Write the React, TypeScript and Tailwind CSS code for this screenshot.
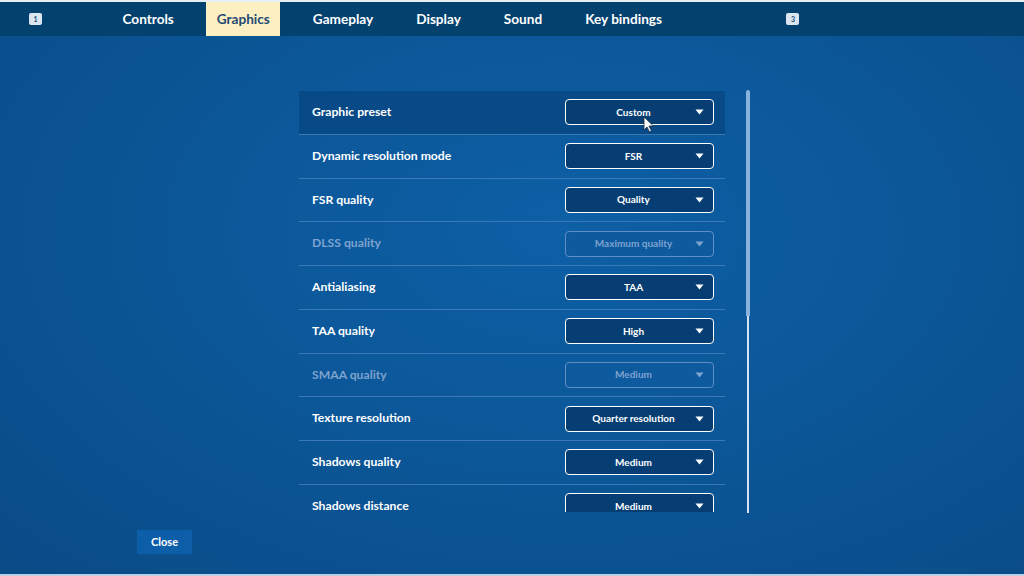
import React from "react";

type Row = { label: string; value: string; disabled?: boolean; active?: boolean };

const rows: Row[] = [
    { label: "Graphic preset", value: "Custom", active: true },
    { label: "Dynamic resolution mode", value: "FSR" },
    { label: "FSR quality", value: "Quality" },
    { label: "DLSS quality", value: "Maximum quality", disabled: true },
    { label: "Antialiasing", value: "TAA" },
    { label: "TAA quality", value: "High" },
    { label: "SMAA quality", value: "Medium", disabled: true },
    { label: "Texture resolution", value: "Quarter resolution" },
    { label: "Shadows quality", value: "Medium" },
    { label: "Shadows distance", value: "Medium" },
];

const tabs = ["Controls", "Graphics", "Gameplay", "Display", "Sound", "Key bindings"];

function KeyBadge({ k }: { k: string }) {
    return (
        <div className="w-[13px] h-[12px] rounded-[2px] bg-[#dbe6f1] text-[#1d4a78] text-[7px] font-bold flex items-center justify-center leading-none">
            {k}
        </div>
    );
}

function Caret({ dim }: { dim?: boolean }) {
    return (
        <svg width="9" height="6" viewBox="0 0 9 6" className="absolute right-[9px] top-1/2 -translate-y-1/2">
            <path d="M0.5 0.5 H8.5 L4.5 5.5 Z" fill={dim ? "#7fa3cf" : "#ffffff"} />
        </svg>
    );
}

function Dropdown({ value, disabled }: { value: string; disabled?: boolean }) {
    return (
        <div
            className={`relative w-[149px] h-[26px] rounded-[4px] border-[1.5px] flex items-center justify-center text-[10px] font-bold ${
                disabled
                    ? "border-[#5f8fc4] bg-[#0d5a9f] text-[#7fa3cf]"
                    : "border-white bg-[#063e74] text-white"
            }`}
        >
            <span className="-ml-[12px]">{value}</span>
            <Caret dim={disabled} />
        </div>
    );
}

export default function App() {
    return (
        <div
            className="w-full h-[576px] overflow-hidden flex flex-col bg-[radial-gradient(ellipse_at_55%_40%,#0d5fa6_0%,#0b5595_55%,#0a4b87_100%)] text-white"
            style={{ fontFamily: "Lato, 'Open Sans', sans-serif" }}
        >
            {/* top edge */}
            <div className="h-[2px] bg-[#e6eef6] shrink-0" />

            {/* Tab bar */}
            <div className="h-[34px] shrink-0 bg-[#03416f] flex items-center">
                <div className="w-[29px]" />
                <KeyBadge k="1" />
                <div className="w-[70px]" />
                <div className="flex items-stretch h-full gap-[22px]">
                    {tabs.map((t) => (
                        <div
                            key={t}
                            className={`px-[10.5px] flex items-center text-[13.6px] font-bold ${
                                t === "Graphics" ? "bg-[#fcefc2] text-[#244a74]" : "text-white"
                            }`}
                        >
                            {t}
                        </div>
                    ))}
                </div>
                <div className="w-[114px]" />
                <KeyBadge k="3" />
            </div>

            {/* Body */}
            <div className="flex-1 flex relative">
                <div className="flex flex-col">
                    <div className="h-[55px]" />
                    <div className="flex">
                        <div className="w-[299px]" />
                        <div className="w-[426px] h-[421px] overflow-hidden flex flex-col">
                            {rows.map((r) => (
                                <div
                                    key={r.label}
                                    className={`shrink-0 h-[43.75px] border-b border-[#3a78b6] pl-[13px] pr-[11px] flex items-center justify-between ${
                                        r.active ? "bg-[#074a87]" : ""
                                    }`}
                                >
                                    <span className={`text-[12.2px] font-bold ${r.disabled ? "text-[#7fa3cf]" : "text-white"}`}>
                                        {r.label}
                                    </span>
                                    <Dropdown value={r.value} disabled={r.disabled} />
                                </div>
                            ))}
                        </div>
                        <div className="w-[21px]" />
                        {/* Scrollbar */}
                        <div className="flex flex-col items-center w-[4px] h-[423px] -mt-[1px]">
                            <div className="w-[4px] h-[226px] rounded-t-[2px] bg-[#8ab2df]" />
                            <div className="w-[2px] flex-1 bg-[#d3e2f2]" />
                        </div>
                    </div>
                    <div className="flex mt-[17px]">
                        <div className="w-[137px]" />
                        <div className="w-[55px] h-[24px] bg-[#0d5ea9] flex items-center justify-center text-[11px] font-bold">
                            Close
                        </div>
                    </div>
                </div>
                {/* mouse cursor */}
                <svg width="12" height="17" viewBox="0 0 12 17" className="absolute left-[643px] top-[80px]">
                    <path d="M1 1 L1 14 L4 11 L6.5 16 L8.5 15 L6 10 L10.5 10 Z" fill="#ffffff" stroke="#1b2a3a" strokeWidth="0.8" />
                </svg>
            </div>

            {/* bottom edge */}
            <div className="h-[2px] bg-[#b9d0e6] shrink-0" />
        </div>
    );
}
